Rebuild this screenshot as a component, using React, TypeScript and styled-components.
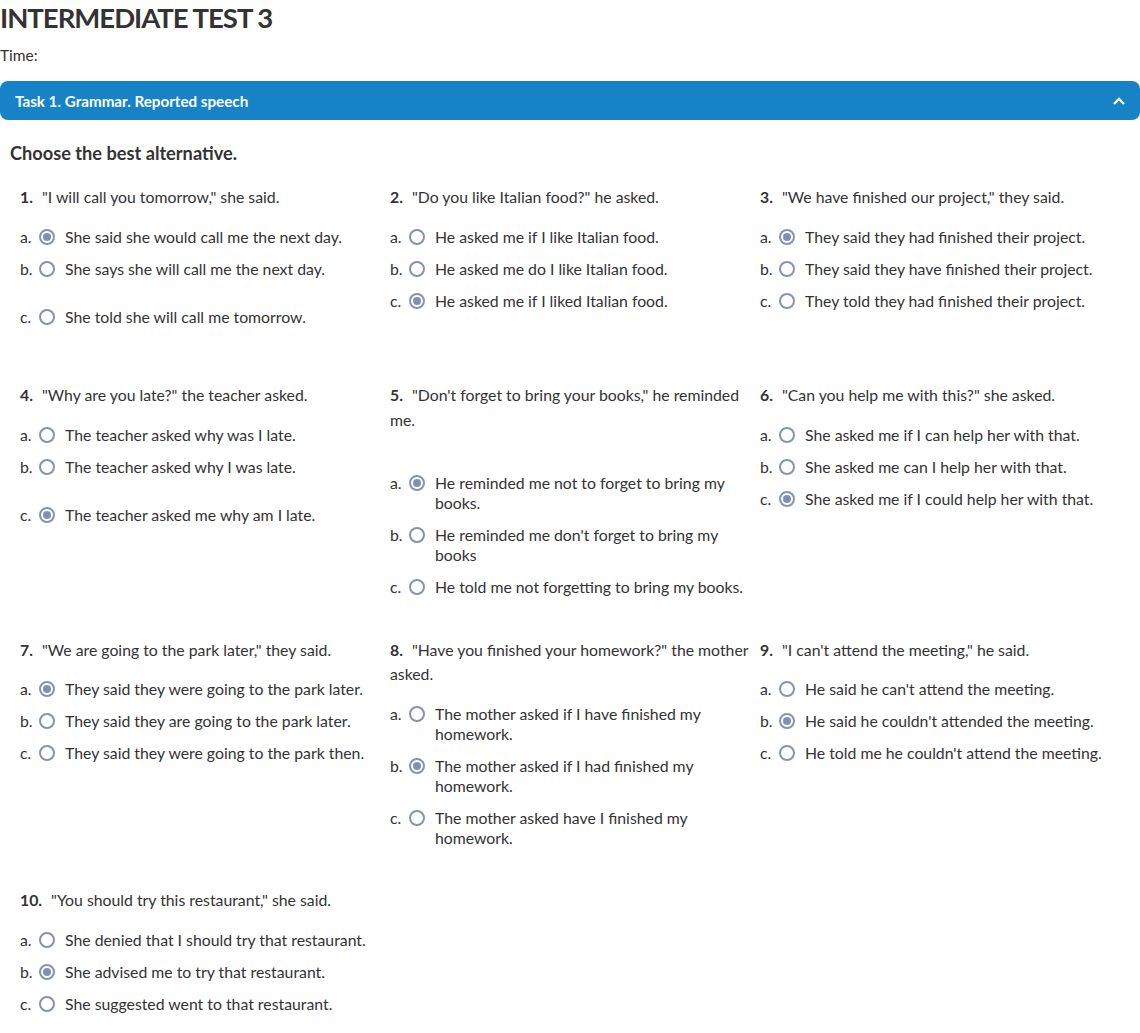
import React from 'react';
import styled, { createGlobalStyle } from 'styled-components';

const GlobalStyle = createGlobalStyle`
  body {
    margin: 0;
    background: #ffffff;
    font-family: Lato, "Noto Sans", sans-serif;
    color: #333333;
  }
`;

const Page = styled.div`
  width: 1140px;
`;

const Title = styled.h1`
  margin: 0;
  font-size: 27.5px;
  line-height: 36px;
  font-weight: 700;
  letter-spacing: -1px;
  color: #333333;
`;

const Time = styled.div`
  margin-top: 9px;
  font-size: 15.5px;
  line-height: 20px;
`;

const TaskBar = styled.div`
  margin-top: 16px;
  height: 39px;
  border-radius: 8px;
  background: #1583c6;
  color: #ffffff;
  display: flex;
  align-items: center;
  justify-content: space-between;
  padding: 0 14px 0 15px;
  font-size: 15.2px;
  font-weight: 700;
`;

const Instruction = styled.h2`
  margin: 21px 0 0 10px;
  font-size: 18.2px;
  line-height: 24px;
  font-weight: 700;
`;

const Grid = styled.div`
  margin-top: 20px;
  padding-left: 10px;
  display: grid;
  grid-template-columns: repeat(3, 370px);
  row-gap: 40.5px;
  align-items: start;
`;

const Question = styled.div`
  padding-left: 10px;
`;

const Prompt = styled.div`
  font-size: 15.8px;
  line-height: 24.5px;
`;

const Num = styled.b`
  margin-right: 9px;
`;

const Options = styled.div<{ $extraTop?: number }>`
  display: flex;
  flex-direction: column;
  gap: 12px;
  margin-top: ${(p) => 17 + (p.$extraTop || 0)}px;
`;

const Option = styled.label<{ $extra?: number }>`
  display: flex;
  align-items: flex-start;
  font-size: 15.8px;
  line-height: 20px;
  margin: ${(p) => (p.$extra ? `${p.$extra}px 0` : '0')};
`;

const Letter = styled.span`
  width: 19px;
  flex: none;
`;

const Radio = styled.span<{ $checked?: boolean }>`
  flex: none;
  width: 16px;
  height: 16px;
  box-sizing: border-box;
  margin-top: 2px;
  margin-right: 10px;
  border-radius: 50%;
  border: 2px solid #8593b3;
  display: flex;
  align-items: center;
  justify-content: center;
  &::after {
    content: '';
    width: 8px;
    height: 8px;
    border-radius: 50%;
    background: ${(p) => (p.$checked ? '#8090b5' : 'transparent')};
  }
`;

const OptionText = styled.span``;

type Opt = { text: string; checked?: boolean; extra?: number };
type Q = { prompt: string; options: Opt[]; extraTop?: number };

const questions: Q[] = [
  {
    prompt: '"I will call you tomorrow," she said.',
    options: [
      { text: 'She said she would call me the next day.', checked: true },
      { text: 'She says she will call me the next day.' },
      { text: 'She told she will call me tomorrow.', extra: 16 },
    ],
  },
  {
    prompt: '"Do you like Italian food?" he asked.',
    options: [
      { text: 'He asked me if I like Italian food.' },
      { text: 'He asked me do I like Italian food.' },
      { text: 'He asked me if I liked Italian food.', checked: true },
    ],
  },
  {
    prompt: '"We have finished our project," they said.',
    options: [
      { text: 'They said they had finished their project.', checked: true },
      { text: 'They said they have finished their project.' },
      { text: 'They told they had finished their project.' },
    ],
  },
  {
    prompt: '"Why are you late?" the teacher asked.',
    options: [
      { text: 'The teacher asked why was I late.' },
      { text: 'The teacher asked why I was late.' },
      { text: 'The teacher asked me why am I late.', checked: true, extra: 16 },
    ],
  },
  {
    prompt: '"Don\'t forget to bring your books," he reminded me.',
    extraTop: 24,
    options: [
      { text: 'He reminded me not to forget to bring my books.', checked: true },
      { text: "He reminded me don't forget to bring my books" },
      { text: 'He told me not forgetting to bring my books.' },
    ],
  },
  {
    prompt: '"Can you help me with this?" she asked.',
    options: [
      { text: 'She asked me if I can help her with that.' },
      { text: 'She asked me can I help her with that.' },
      { text: 'She asked me if I could help her with that.', checked: true },
    ],
  },
  {
    prompt: '"We are going to the park later," they said.',
    options: [
      { text: 'They said they were going to the park later.', checked: true },
      { text: 'They said they are going to the park later.' },
      { text: 'They said they were going to the park then.' },
    ],
  },
  {
    prompt: '"Have you finished your homework?" the mother asked.',
    options: [
      { text: 'The mother asked if I have finished my homework.' },
      { text: 'The mother asked if I had finished my homework.', checked: true },
      { text: 'The mother asked have I finished my homework.' },
    ],
  },
  {
    prompt: '"I can\'t attend the meeting," he said.',
    options: [
      { text: "He said he can't attend the meeting." },
      { text: "He said he couldn't attended the meeting.", checked: true },
      { text: "He told me he couldn't attend the meeting." },
    ],
  },
  {
    prompt: '"You should try this restaurant," she said.',
    options: [
      { text: 'She denied that I should try that restaurant.' },
      { text: 'She advised me to try that restaurant.', checked: true },
      { text: 'She suggested went to that restaurant.' },
    ],
  },
];

const letters = ['a.', 'b.', 'c.'];

const Chevron = () => (
  <svg width="14" height="10" viewBox="0 0 14 10" fill="none">
    <polyline points="2,8 7,3 12,8" stroke="#ffffff" strokeWidth="2.4" />
  </svg>
);

export default function App() {
  return (
    <Page>
      <GlobalStyle />
      <Title>INTERMEDIATE TEST 3</Title>
      <Time>Time:</Time>
      <TaskBar>
        <span>Task 1. Grammar. Reported speech</span>
        <Chevron />
      </TaskBar>
      <Instruction>Choose the best alternative.</Instruction>
      <Grid>
        {questions.map((q, i) => (
          <Question key={i}>
            <Prompt>
              <Num>{i + 1}.</Num>
              {q.prompt}
            </Prompt>
            <Options $extraTop={q.extraTop}>
              {q.options.map((o, j) => (
                <Option key={j} $extra={o.extra}>
                  <Letter>{letters[j]}</Letter>
                  <Radio $checked={o.checked} />
                  <OptionText>{o.text}</OptionText>
                </Option>
              ))}
            </Options>
          </Question>
        ))}
      </Grid>
    </Page>
  );
}
